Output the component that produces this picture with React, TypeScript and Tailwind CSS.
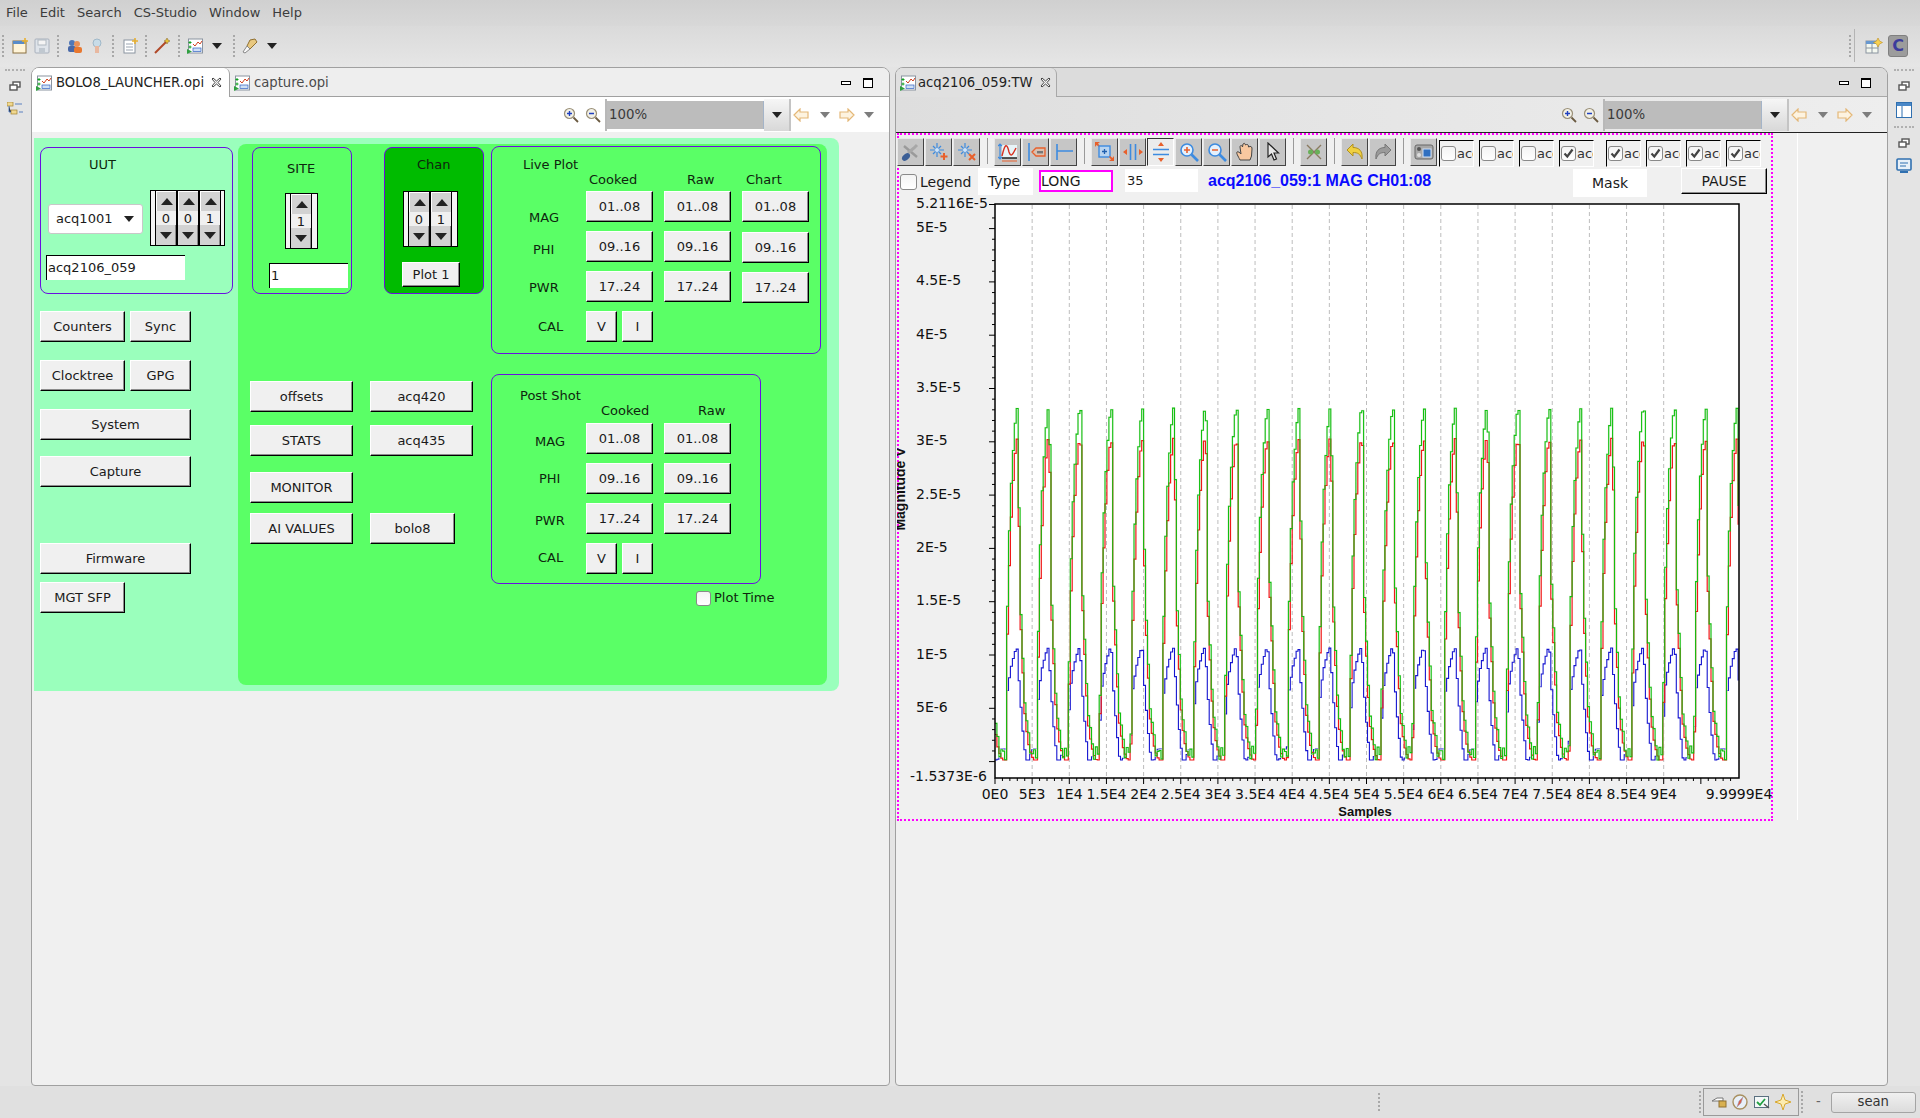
import React from 'react';

// --- small shared bits ---

const Tri = ({ up, className = 'fill-[#222]' }: { up?: boolean; className?: string }) => (
  <svg width="12" height="7" viewBox="0 0 12 7" className={className}>
    <path d={up ? 'M6 0 L12 7 L0 7 Z' : 'M0 0 L12 0 L6 7 Z'} />
  </svg>
);

const Btn = ({ className, children }: { className: string; children: React.ReactNode }) => (
  <button className={`absolute flex items-center justify-center bg-[#f0f0f0] text-[13px] text-[#1a1a1a] border-t border-l border-t-white border-l-white border-r border-b border-r-black border-b-black shadow-[inset_-1px_-1px_0_#8c8c8c] ${className}`}>
    {children}
  </button>
);

const Label = ({ className, children }: { className: string; children: React.ReactNode }) => (
  <span className={`absolute h-[16px] leading-[16px] text-[13px] text-[#0e260e] whitespace-nowrap ${className}`}>{children}</span>
);

const Spinner = ({ digits, className }: { digits: string[]; className: string }) => (
  <div className={`absolute flex h-[56px] border border-black bg-black ${className}`}>
    <div className="w-[4px] bg-[#f4f4f4]" />
    {digits.map((d, i) => (
      <div key={i} className="w-[22px] px-[1px] flex flex-col">
        <div className="h-[20px] bg-[#d2d2d2] border-t border-l border-white flex items-center justify-center"><Tri up /></div>
        <div className="h-[14px] bg-[#f0f0f0] flex items-center justify-center text-[13px] leading-none text-[#1a1a1a]">{d}</div>
        <div className="h-[20px] bg-[#d2d2d2] border-r border-[#888] flex items-center justify-center"><Tri /></div>
      </div>
    ))}
    <div className="flex-1 bg-[#f4f4f4]" />
  </div>
);

const Box = ({ className }: { className: string }) => (
  <div className={`absolute rounded-[8px] border border-[#6a10e0] ${className}`} />
);

const Check = ({ checked, className = '' }: { checked?: boolean; className?: string }) => (
  <div className={`w-[15px] h-[15px] rounded-[3px] border border-[#8a8a8a] bg-linear-to-b from-[#f4f4f4] to-white flex items-center justify-center shrink-0 ${className}`}>
    {checked && (
      <svg width="11" height="11" viewBox="0 0 11 11"><path d="M1.5 5.5 L4.3 8.5 L9.5 1.5" fill="none" stroke="#444" strokeWidth="2.2" /></svg>
    )}
  </div>
);

const Grip = ({ className = '' }: { className?: string }) => (
  <div className={`w-[2px] h-[22px] shrink-0 border-l-2 border-dotted border-[#a8a8a8] ${className}`} />
);

const HGrip = () => <div className="w-[20px] h-[2px] border-t-2 border-dotted border-[#b0b0b0]" />;

// --- icons ---

const OpiIcon = () => (
  <svg width="16" height="16" viewBox="0 0 16 16" className="shrink-0">
    <rect x="1.5" y="1" width="14" height="14" fill="#fff" stroke="#8a94a0" />
    <path d="M6 6 L8 8 L11 4 L13 6 L15 3" fill="none" stroke="#d04020" />
    <rect x="6" y="10" width="8" height="3.5" fill="#cfe0f5" stroke="#3060c0" strokeWidth=".7" />
    <path d="M3 3v3M1.5 4.5h3M3 7.5v3M1.5 9h3" stroke="#10a020" />
    <path d="M0 11 L5 13.5 L0 16 Z" fill="#30a040" />
  </svg>
);

const CloseX = () => (
  <svg width="11" height="11" viewBox="0 0 11 11" className="shrink-0">
    <path d="M1 2 L2 1 L5.5 4 L9 1 L10 2 L7 5.5 L10 9 L9 10 L5.5 7 L2 10 L1 9 L4 5.5 Z" fill="#f4f4f4" stroke="#333" strokeWidth=".9" />
  </svg>
);

const Restore = () => (
  <svg width="12" height="12" viewBox="0 0 12 12">
    <rect x="4" y="2" width="7" height="5" fill="#fff" stroke="#555" strokeWidth="1.4" />
    <rect x="1" y="5" width="7" height="5" fill="#fff" stroke="#555" strokeWidth="1.4" />
  </svg>
);

const Magnifier = ({ minus }: { minus?: boolean }) => (
  <svg width="16" height="16" viewBox="0 0 16 16">
    <circle cx="6.5" cy="6.5" r="5" fill="#f2f0e6" stroke="#9a9078" strokeWidth="1.2" />
    <path d="M10.5 10.5 L15 15" stroke="#6a5a40" strokeWidth="1.8" />
    <path d={minus ? 'M4 6.5h5' : 'M4 6.5h5M6.5 4v5'} stroke="#2040c0" strokeWidth="1.4" />
  </svg>
);

const NavArrow = ({ back }: { back?: boolean }) => (
  <svg width="16" height="14" viewBox="0 0 16 14">
    <path d={back ? 'M1 7 L7 1 L7 4 L15 4 L15 10 L7 10 L7 13 Z' : 'M15 7 L9 1 L9 4 L1 4 L1 10 L9 10 L9 13 Z'} fill="#fdf3e0" stroke="#e4b878" strokeWidth="1.2" />
  </svg>
);

const SmallCaret = () => (
  <svg width="10" height="6" viewBox="0 0 10 6" className="fill-[#7d7d7d]"><path d="M0 0h10L5 6Z" /></svg>
);

const ToolCaret = ({ className }: { className: string }) => (
  <svg width="10" height="6" viewBox="0 0 10 6" className={`shrink-0 fill-[#222] ${className}`}><path d="M0 0h10L5 6Z" /></svg>
);

// zoom combo + history arrows, same in both editors
const ZoomBar = () => (
  <div className="flex items-center justify-end h-full pr-[15px]">
    <Magnifier />
    <div className="ml-[6px]"><Magnifier minus /></div>
    <div className="ml-[4px] w-[186px] h-[32px] flex items-stretch border-l-2 border-[#b8b8b8]">
      <div className="my-[2px] w-[157px] bg-[#bcbcbc] pl-[2px] flex items-center text-[13.33px] text-[#3a3a3a] border-r border-[#a4b4c8]">100%</div>
      <div className="flex-1 flex items-center justify-center bg-linear-to-b from-[#f6f6f6] to-[#d8d8d8] border-r-2 border-[#c4c4c4]">
        <ToolCaret className="" />
      </div>
    </div>
    <div className="ml-[2px]"><NavArrow back /></div>
    <div className="ml-[11px]"><SmallCaret /></div>
    <div className="ml-[9px]"><NavArrow /></div>
    <div className="ml-[9px]"><SmallCaret /></div>
  </div>
);

const MinMax = () => (
  <div className="flex items-center gap-[12px] pr-[16px]">
    <div className="w-[10px] h-[4px] border border-black bg-white" />
    <div className="w-[10px] h-[10px] border border-black border-t-2 bg-white" />
  </div>
);

// graph toolbar icons, 20 box
const gBlue = '#3d8be0';
const gOrange = '#e8602c';
const Sparkle = () => (
  <>
    <path d="M8 1v14M1 8h14" stroke={gBlue} strokeWidth="1.2" />
    <path d="M4 4l8 8M12 4l-8 8" stroke={gBlue} strokeWidth="1.2" />
    <circle cx="8" cy="8" r="2" fill="#cfe4fa" />
  </>
);

const graphIcons: React.ReactNode[] = [
  <>
    <path d="M3 4 L16 15" stroke="#9a9a9a" strokeWidth="2.4" />
    <path d="M16 3 L13 6 L7 11" stroke="#a8a8a8" strokeWidth="3" />
    <ellipse cx="5" cy="15" rx="4.5" ry="3" fill="#3c5f96" transform="rotate(-40 5 15)" />
  </>,
  <>
    <Sparkle />
    <path d="M15 11v7M11.5 14.5h7" stroke={gOrange} strokeWidth="2" />
  </>,
  <>
    <Sparkle />
    <path d="M12 12l6 6M18 12l-6 6" stroke={gOrange} strokeWidth="2" />
  </>,
  <>
    <rect x="4" y="3" width="15" height="13" fill="#e8f4f8" />
    <path d="M2 2v15M0 4l2-2 2 2M0 15l2 2 2-2" stroke={gBlue} fill="none" strokeWidth="1.2" />
    <path d="M4 14 C7 1 9 1 11 10 C13 16 15 12 18 6" stroke="#d83020" fill="none" strokeWidth="1.4" />
    <path d="M4 16h15" stroke="#222" strokeWidth="1.4" />
    <path d="M4 19h15" stroke={gOrange} strokeWidth="1.2" />
  </>,
  <>
    <path d="M3 1v18" stroke={gBlue} strokeWidth="1.6" />
    <path d="M6 10 L10 6 H19 V14 H10 Z" fill="#d8c0b0" stroke={gOrange} strokeWidth="1.3" />
    <rect x="11" y="9" width="6" height="2.4" fill="#777" />
  </>,
  <>
    <path d="M3 2v16" stroke={gBlue} strokeWidth="1.6" />
    <path d="M3 9h16" stroke={gBlue} strokeWidth="1.6" />
  </>,
  <>
    <path d="M0 0h5L3 1.500L5 4 4 5 1.500 3 0 5Z" fill={gOrange} />
    <rect x="4" y="4" width="11" height="11" fill="#b8d4f0" stroke={gBlue} strokeWidth="1.4" />
    <path d="M7 9.500h5M9.500 7v5" stroke="#2060b0" strokeWidth="1.3" />
    <path d="M19 19h-5l2-1.500L14 15l1-1 2.500 2L19 14Z" fill={gOrange} />
  </>,
  <>
    <path d="M7.500 2v16M12.500 2v16" stroke={gBlue} strokeWidth="1.6" />
    <path d="M0 10l4-3v6ZM20 10l-4-3v6Z" fill={gOrange} />
  </>,
  <>
    <path d="M2 7.500h16M2 12.500h16" stroke={gBlue} strokeWidth="1.6" />
    <path d="M10 0l-3 4h6ZM10 20l-3-4h6Z" fill={gOrange} />
  </>,
  <>
    <circle cx="8" cy="8" r="6" fill="#e4f0fc" stroke={gBlue} strokeWidth="1.6" />
    <path d="M12.500 12.500 L19 19" stroke={gBlue} strokeWidth="2.6" />
    <path d="M5 8h6M8 5v6" stroke={gOrange} strokeWidth="1.6" />
  </>,
  <>
    <circle cx="8" cy="8" r="6" fill="#e4f0fc" stroke={gBlue} strokeWidth="1.6" />
    <path d="M12.500 12.500 L19 19" stroke={gBlue} strokeWidth="2.6" />
    <path d="M5 8h6" stroke={gOrange} strokeWidth="1.6" />
  </>,
  <path d="M5 18 C3 14 1 11 2 10 C3 9 5 11 6 12 L5 5 C5 3 7 3 7.500 5 L8 2 C9 1 10 1 10.500 3 L11.500 2.500 C13 2 13.500 3.500 13.500 5 L15 4.500 C16.500 4 17 5.500 17 7 L16.500 14 L15 18 Z" fill="#f8c8a0" stroke="#444" strokeWidth="1" />,
  <path d="M5 1 L5 15 L8.500 12 L11 18 L13.500 17 L11 11 L15.500 11 Z" fill="#e8e8e8" stroke="#222" strokeWidth="1.2" />,
  <>
    <path d="M3 3 L17 17M17 3 L3 17" stroke="#8a7a60" strokeWidth="1.4" />
    <circle cx="6.500" cy="10" r="2.500" fill="#68b058" />
    <circle cx="13.500" cy="10" r="2.500" fill="#68b058" />
  </>,
  <path d="M2 8 L8 2 V5.500 C14 5.500 18 9 17 17 C15 12 13 10.500 8 10.500 V14 Z" fill="#f0d040" stroke="#b09020" strokeWidth="1" />,
  <path d="M18 8 L12 2 V5.500 C6 5.500 2 9 3 17 C5 12 7 10.500 12 10.500 V14 Z" fill="#9a9a9a" stroke="#777" strokeWidth="1" />,
  <>
    <rect x="1" y="3" width="18" height="14" rx="2" fill="#a8a8a8" stroke="#666" />
    <circle cx="5" cy="7" r="2" fill="#555" />
    <circle cx="5" cy="13" r="2" fill="#ddd" />
    <rect x="9" y="7" width="8" height="8" fill="#2f6fc0" stroke="#cfe0f5" />
  </>,
];

const ToolBtn = ({ pressed, className = '', children }: { pressed?: boolean; className?: string; children: React.ReactNode }) => (
  <div className={`w-[27px] h-[28px] shrink-0 flex items-center justify-center border ${pressed ? 'bg-[#ececec] border-t-[#333] border-l-[#333] border-r-white border-b-white' : 'bg-[#c6c6c6] border-t-[#e8e8e8] border-l-[#e8e8e8] border-r-[#444] border-b-[#444]'} ${className}`}>
    <svg width="20" height="20" viewBox="0 0 20 20">{children}</svg>
  </div>
);

const ToolSep = () => <div className="w-[1px] h-[26px] bg-[#9a9a9a] ml-[6px] mr-[5px] shrink-0" />;

const ChanCheck = ({ checked, className }: { checked?: boolean; className: string }) => (
  <div className={`absolute top-[7px] w-[35px] h-[27px] flex items-center overflow-hidden border-t border-l border-t-black border-l-black border-r border-b border-r-white border-b-white bg-[#f0f0f0] ${className}`}>
    <Check checked={checked} className="ml-[1px]" />
    <span className="text-[13px] ml-[1px] text-[#333]">acq</span>
  </div>
);

// --- chart data, page pixel coords ---

const PERIOD = 31.3;
const X0 = 995;
const X1 = 1739;
const STEP = 1.93;

const greenPts: [number, number][] = [
  [-11.3, 759], [-11, 720], [-10, 640], [-9, 580], [-7.5, 530], [-6, 490], [-4, 455], [-2, 425], [0, 407], [1.5, 410],
  [2, 480], [2.6, 580], [5.7, 650], [8.3, 710], [12, 733], [14, 755], [15, 759], [16.5, 745], [18, 750], [20, 759],
];
const redPts: [number, number][] = [
  [-11.3, 759], [-11, 735], [-10, 665], [-9, 610], [-7.5, 565], [-6, 525], [-4, 485], [-2, 455], [0, 437], [1.5, 445],
  [2, 500], [2.6, 595], [5.7, 665], [8.3, 720], [12, 745], [14, 752], [15, 755], [17, 759], [20, 759],
];
const bluePts: [number, number][] = [
  [-11.3, 748], [-11, 727], [-9.5, 690], [-6, 667], [-3, 655], [-1, 648], [0, 647], [1, 652], [2.3, 683], [5.7, 727],
  [9, 759], [12, 759], [14, 752], [16, 748], [20, 748],
];

const sample = (pts: [number, number][], x: number) => {
  let o = (x - 1016) % PERIOD;
  if (o < -11.3) o += PERIOD;
  if (o > 20) o -= PERIOD;
  for (let i = 1; i < pts.length; i++) {
    if (o <= pts[i][0]) {
      const [ax, ay] = pts[i - 1];
      const [bx, by] = pts[i];
      return ay + ((by - ay) * (o - ax)) / (bx - ax);
    }
  }
  return pts[pts.length - 1][1];
};

const trace = (pts: [number, number][], dx: number) => {
  let d = `M${X0} ${sample(pts, X0).toFixed(1)}`;
  for (let x = X0 + dx; x < X1; x += dx) {
    d += `H${x.toFixed(1)}V${sample(pts, x).toFixed(1)}`;
  }
  return d;
};

const Chart = () => {
  const xLabels = ['0E0', '5E3', '1E4', '1.5E4', '2E4', '2.5E4', '3E4', '3.5E4', '4E4', '4.5E4', '5E4', '5.5E4', '6E4', '6.5E4', '7E4', '7.5E4', '8E4', '8.5E4', '9E4'];
  const pxPerK = 7.43;
  const yLabels = ['5E-6', '1E-5', '1.5E-5', '2E-5', '2.5E-5', '3E-5', '3.5E-5', '4E-5', '4.5E-5', '5E-5'];
  const zeroY = 760.6;
  const minor = 10.66;
  return (
    <svg width="876" height="622" viewBox="897 195 876 622" className="absolute left-[1px] top-[63px]" style={{ fontFamily: '"DejaVu Sans", sans-serif' }}>
      <rect x={X0} y={203} width={X1 - X0} height={574} fill="#fff" />
      {xLabels.slice(1).map((_, i) => (
        <line key={i} x1={X0 + (i + 1) * 5 * pxPerK} x2={X0 + (i + 1) * 5 * pxPerK} y1={204} y2={776} stroke="#bdbdbd" strokeDasharray="4 3" />
      ))}
      <path d={trace(bluePts, STEP)} fill="none" stroke="#1414d0" strokeWidth="1.1" />
      <path d={trace(greenPts, STEP)} fill="none" stroke="#edf3e6" strokeWidth="2" />
      <path d={trace(redPts, STEP)} fill="none" stroke="#f01818" strokeWidth="1.2" />
      <path d={trace(greenPts, STEP)} fill="none" stroke="#10c010" strokeWidth="1.1" />
      <rect x={X0} y={203} width={X1 - X0} height={574} fill="none" stroke="#000" strokeWidth="1.5" />
      {Array.from({ length: 100 }, (_, i) => (
        <line key={i} x1={X0 + i * pxPerK} x2={X0 + i * pxPerK} y1={777} y2={i % 5 === 0 ? 783 : 780} stroke="#000" />
      ))}
      {Array.from({ length: 52 }, (_, i) => (
        <line key={i} x1={i % 5 === 0 ? 989 : 992} x2={X0} y1={zeroY - i * minor} y2={zeroY - i * minor} stroke="#000" />
      ))}
      <line x1={989} x2={X0} y1={203.500} y2={203.500} stroke="#000" />
      <g fontSize="14" fill="#111">
        <text x={916} y={207}>5.2116E-5</text>
        {yLabels.map((t, i) => (
          <text key={t} x={916} y={zeroY - (i + 1) * 5 * minor + 3.5}>{t}</text>
        ))}
        <text x={910} y={780}>-1.5373E-6</text>
        {xLabels.map((t, i) => (
          <text key={t} x={X0 + i * 5 * pxPerK} y={798} textAnchor="middle">{t}</text>
        ))}
        <text x={X1} y={798} textAnchor="middle">9.9999E4</text>
      </g>
      <g fontWeight="700" fill="#111" style={{ fontFamily: '"Liberation Sans", sans-serif' }}>
        <text x={1365} y={815} fontSize="13" textAnchor="middle">Samples</text>
        <text transform="translate(905 488) rotate(-90)" fontSize="14" textAnchor="middle">Magnitude V</text>
      </g>
    </svg>
  );
};

// --- OPI screens ---

const LauncherCanvas = () => (
  <div className="relative ml-[2px] mt-[6px] w-[805px] h-[553px] bg-[#9affbc] rounded-r-[8px] rounded-bl-none">
    <div className="absolute left-[204px] top-[6px] w-[589px] h-[541px] bg-[#5aff66] rounded-[8px]" />

    <Box className="left-[6px] top-[9px] w-[193px] h-[147px]" />
    <Box className="left-[218px] top-[9px] w-[100px] h-[147px]" />
    <Box className="left-[350px] top-[9px] w-[100px] h-[147px] bg-[#00bb00]" />
    <Box className="left-[457px] top-[8px] w-[330px] h-[208px]" />
    <Box className="left-[457px] top-[236px] w-[270px] h-[210px]" />

    <Label className="left-[55px] top-[19px]">UUT</Label>
    <div className="absolute left-[14px] top-[66px] w-[95px] h-[30px] bg-white border border-[#c8c8c8] rounded-[3px] flex items-center justify-between pl-[7px] pr-[8px] text-[13px] text-[#1a1a1a]">
      acq1001
      <svg width="10" height="6" viewBox="0 0 10 6" className="fill-[#222]"><path d="M0 0h10L5 6Z" /></svg>
    </div>
    <Spinner digits={['0', '0', '1']} className="left-[116px] top-[52px] w-[75px]" />
    <div className="absolute left-[12px] top-[117px] w-[139px] h-[25px] bg-white border-t border-l border-black pl-[1px] flex items-center text-[13px] text-[#1a1a1a]">acq2106_059</div>

    <Label className="left-[253px] top-[23px]">SITE</Label>
    <Spinner digits={['1']} className="left-[251px] top-[55px] w-[33px]" />
    <div className="absolute left-[235px] top-[125px] w-[79px] h-[25px] bg-white border-t border-l border-black pl-[1px] flex items-center text-[13px] text-[#1a1a1a]">1</div>

    <Label className="left-[383px] top-[19px]">Chan</Label>
    <Spinner digits={['0', '1']} className="left-[369px] top-[53px] w-[55px]" />
    <Btn className="left-[368px] top-[124px] w-[58px] h-[25px]">Plot 1</Btn>

    <Btn className="left-[6px] top-[173px] w-[85px] h-[31px]">Counters</Btn>
    <Btn className="left-[96px] top-[173px] w-[61px] h-[31px]">Sync</Btn>
    <Btn className="left-[6px] top-[222px] w-[85px] h-[31px]">Clocktree</Btn>
    <Btn className="left-[96px] top-[222px] w-[61px] h-[31px]">GPG</Btn>
    <Btn className="left-[6px] top-[271px] w-[151px] h-[31px]">System</Btn>
    <Btn className="left-[6px] top-[318px] w-[151px] h-[31px]">Capture</Btn>
    <Btn className="left-[6px] top-[405px] w-[151px] h-[31px]">Firmware</Btn>
    <Btn className="left-[6px] top-[444px] w-[85px] h-[31px]">MGT SFP</Btn>

    <Btn className="left-[216px] top-[243px] w-[103px] h-[31px]">offsets</Btn>
    <Btn className="left-[336px] top-[243px] w-[103px] h-[31px]">acq420</Btn>
    <Btn className="left-[216px] top-[287px] w-[103px] h-[31px]">STATS</Btn>
    <Btn className="left-[336px] top-[287px] w-[103px] h-[31px]">acq435</Btn>
    <Btn className="left-[216px] top-[334px] w-[103px] h-[31px]">MONITOR</Btn>
    <Btn className="left-[216px] top-[375px] w-[103px] h-[31px]">AI VALUES</Btn>
    <Btn className="left-[336px] top-[375px] w-[85px] h-[31px]">bolo8</Btn>

    <Label className="left-[489px] top-[19px]">Live Plot</Label>
    <Label className="left-[555px] top-[34px]">Cooked</Label>
    <Label className="left-[653px] top-[34px]">Raw</Label>
    <Label className="left-[712px] top-[34px]">Chart</Label>
    <Label className="left-[495px] top-[72px]">MAG</Label>
    <Label className="left-[499px] top-[104px]">PHI</Label>
    <Label className="left-[495px] top-[142px]">PWR</Label>
    <Label className="left-[504px] top-[181px]">CAL</Label>
    <Btn className="left-[552px] top-[53px] w-[67px] h-[31px]">01..08</Btn>
    <Btn className="left-[630px] top-[53px] w-[67px] h-[31px]">01..08</Btn>
    <Btn className="left-[708px] top-[53px] w-[67px] h-[31px]">01..08</Btn>
    <Btn className="left-[552px] top-[93px] w-[67px] h-[31px]">09..16</Btn>
    <Btn className="left-[630px] top-[93px] w-[67px] h-[31px]">09..16</Btn>
    <Btn className="left-[708px] top-[94px] w-[67px] h-[31px]">09..16</Btn>
    <Btn className="left-[552px] top-[133px] w-[67px] h-[31px]">17..24</Btn>
    <Btn className="left-[630px] top-[133px] w-[67px] h-[31px]">17..24</Btn>
    <Btn className="left-[708px] top-[134px] w-[67px] h-[31px]">17..24</Btn>
    <Btn className="left-[552px] top-[173px] w-[31px] h-[31px]">V</Btn>
    <Btn className="left-[588px] top-[173px] w-[31px] h-[31px]">I</Btn>

    <Label className="left-[486px] top-[250px]">Post Shot</Label>
    <Label className="left-[567px] top-[265px]">Cooked</Label>
    <Label className="left-[664px] top-[265px]">Raw</Label>
    <Label className="left-[501px] top-[296px]">MAG</Label>
    <Label className="left-[505px] top-[333px]">PHI</Label>
    <Label className="left-[501px] top-[375px]">PWR</Label>
    <Label className="left-[504px] top-[412px]">CAL</Label>
    <Btn className="left-[552px] top-[285px] w-[67px] h-[31px]">01..08</Btn>
    <Btn className="left-[630px] top-[285px] w-[67px] h-[31px]">01..08</Btn>
    <Btn className="left-[552px] top-[325px] w-[67px] h-[31px]">09..16</Btn>
    <Btn className="left-[630px] top-[325px] w-[67px] h-[31px]">09..16</Btn>
    <Btn className="left-[552px] top-[365px] w-[67px] h-[31px]">17..24</Btn>
    <Btn className="left-[630px] top-[365px] w-[67px] h-[31px]">17..24</Btn>
    <Btn className="left-[552px] top-[405px] w-[31px] h-[31px]">V</Btn>
    <Btn className="left-[588px] top-[405px] w-[31px] h-[31px]">I</Btn>

    <Check className="absolute left-[662px] top-[453px]" />
    <Label className="left-[680px] top-[452px]">Plot Time</Label>
  </div>
);

const ScopeCanvas = () => (
  <div className="relative w-full h-full border-t border-[#222]">
    <div className="absolute left-[901px] top-0 bottom-[265px] w-[1px] bg-white" />
    <div className="absolute left-[1px] top-[0px] w-[876px] h-[688px] border-2 border-dotted border-[#ff00ff]" />

    <div className="absolute left-[1px] top-[5px] flex gap-[1px]">
      {graphIcons.slice(0, 3).map((g, i) => <ToolBtn key={i}>{g}</ToolBtn>)}
      <ToolSep />
      {graphIcons.slice(3, 6).map((g, i) => <ToolBtn key={i}>{g}</ToolBtn>)}
      <ToolSep />
      {graphIcons.slice(6, 13).map((g, i) => <ToolBtn key={i} pressed={i === 2}>{g}</ToolBtn>)}
      <ToolSep />
      <ToolBtn>{graphIcons[13]}</ToolBtn>
      <ToolSep />
      {graphIcons.slice(14, 16).map((g, i) => <ToolBtn key={i}>{g}</ToolBtn>)}
      <ToolSep />
      <ToolBtn>{graphIcons[16]}</ToolBtn>
    </div>

    <ChanCheck className="left-[543px]" />
    <ChanCheck className="left-[583px]" />
    <ChanCheck className="left-[623px]" />
    <ChanCheck checked className="left-[663px]" />
    <ChanCheck checked className="left-[710px]" />
    <ChanCheck checked className="left-[750px]" />
    <ChanCheck checked className="left-[790px]" />
    <ChanCheck checked className="left-[830px]" />

    <Check className="absolute left-[4px] top-[41px] !w-[17px] !h-[16px]" />
    <span className="absolute left-[24px] top-[41px] leading-[16px] text-[14px] text-[#1a1a1a]">Legend</span>
    <div className="absolute left-[82px] top-[35px] w-[55px] h-[27px] bg-white flex items-center pl-[10px] text-[14px] text-[#1a1a1a]">Type</div>
    <div className="absolute left-[143px] top-[37px] w-[74px] h-[22px] bg-white border-2 border-[#ff00ff] flex items-center pl-[0px] text-[14px] text-[#1a1a1a]">LONG</div>
    <div className="absolute left-[229px] top-[36px] w-[73px] h-[23px] bg-white flex items-center pl-[2px] text-[13px] text-[#1a1a1a]">35</div>
    <span className="absolute left-[312px] top-[38px] leading-[20px] text-[16px] font-bold text-[#0a0aff] whitespace-nowrap" style={{ fontFamily: '"Liberation Sans", sans-serif' }}>acq2106_059:1 MAG CH01:08</span>
    <div className="absolute left-[677px] top-[36px] w-[74px] h-[28px] bg-white flex items-center justify-center text-[14px] text-[#1a1a1a]">Mask</div>
    <Btn className="left-[785px] top-[35px] w-[86px] h-[26px] !text-[14px]">PAUSE</Btn>

    <Chart />
  </div>
);

// --- window ---

const App = () => (
  <div className="w-[1920px] h-[1118px] flex flex-col overflow-hidden bg-[#e4e4e4] text-[13.2px] text-[#3c3c3c]" style={{ fontFamily: '"DejaVu Sans", sans-serif' }}>
    {/* menu bar */}
    <div className="h-[26px] shrink-0 flex items-center gap-[12px] pl-[6px] pb-[1px] text-[13px] bg-linear-to-b from-[#d0d0d0] to-[#d8d8d8]">
      {['File', 'Edit', 'Search', 'CS-Studio', 'Window', 'Help'].map(m => <span key={m}>{m}</span>)}
    </div>

    {/* main toolbar */}
    <div className="h-[41px] shrink-0 flex items-center pb-[2px] bg-linear-to-b from-[#dadada] to-[#e6e6e6]">
      <Grip className="ml-[2px]" />
      <svg width="16" height="16" viewBox="0 0 16 16" className="ml-[8px]"><rect x="1" y="3" width="13" height="12" fill="#fff4d8" stroke="#8a7040" /><rect x="1" y="3" width="13" height="3" fill="#5a8cc8" /><path d="M13 0v6M10 3h6" stroke="#e8b030" strokeWidth="1.6" /></svg>
      <svg width="16" height="16" viewBox="0 0 16 16" className="ml-[6px]"><rect x="1" y="1" width="14" height="14" rx="1" fill="#dfe4ea" stroke="#a8b0bc" /><rect x="4" y="2" width="8" height="5" fill="#f4f4f4" stroke="#b0b8c0" /><rect x="5" y="10" width="6" height="5" fill="#c0c8d0" /></svg>
      <Grip className="ml-[7px]" />
      <svg width="16" height="16" viewBox="0 0 16 16" className="ml-[8px]"><circle cx="5" cy="5" r="3" fill="#5078b8" /><rect x="1" y="8" width="8" height="6" rx="2" fill="#4868a8" /><circle cx="10" cy="6" r="3" fill="#e89058" /><rect x="7" y="9" width="8" height="6" rx="2" fill="#e87830" /></svg>
      <svg width="16" height="16" viewBox="0 0 16 16" className="ml-[6px]"><circle cx="8" cy="5" r="4" fill="#c8dce8" stroke="#a0b8c8" /><rect x="6" y="8" width="4" height="7" fill="#e8b8a0" /></svg>
      <Grip className="ml-[7px]" />
      <svg width="16" height="16" viewBox="0 0 16 16" className="ml-[8px]"><rect x="2" y="2" width="11" height="13" fill="#fff" stroke="#8a94a0" /><path d="M4 6h7M4 9h7M4 12h7" stroke="#9aa4b0" /><path d="M13 0v6M10 3h6" stroke="#e8b030" strokeWidth="1.6" /></svg>
      <Grip className="ml-[7px]" />
      <svg width="16" height="16" viewBox="0 0 16 16" className="ml-[7px]"><path d="M1 15 L12 4" stroke="#b04828" strokeWidth="2" /><path d="M13 0l1 2 2 1-2 1-1 2-1-2-2-1 2-1Z" fill="#e8c030" stroke="#806020" strokeWidth=".5" /></svg>
      <Grip className="ml-[8px]" />
      <div className="ml-[7px]"><OpiIcon /></div>
      <ToolCaret className="ml-[9px]" />
      <Grip className="ml-[11px]" />
      <svg width="16" height="16" viewBox="0 0 16 16" className="ml-[7px]"><path d="M8 2 L13 1 L15 4 L8 11 L5 8 Z" fill="#e8c880" stroke="#907030" /><path d="M5 8 L8 11 L3 15 L1 14 Z" fill="#f8f8f8" stroke="#888" /></svg>
      <ToolCaret className="ml-[9px]" />
      <div className="flex-1" />
      <Grip className="mr-[3px]" />
      <div className="w-[1px] h-[33px] bg-[#b4b4b4]" />
      <svg width="18" height="16" viewBox="0 0 18 16" className="ml-[10px]"><rect x="1" y="3" width="12" height="12" fill="#f4f8f0" stroke="#8a94a0" /><rect x="1" y="3" width="12" height="3" fill="#6898d0" /><path d="M7 6v9M1 10h12" stroke="#8a94a0" /><path d="M13 0l1.500 3 3 1.500-3 1.500L13 9l-1.500-3-3-1.500 3-1.500Z" fill="#f8d050" stroke="#c09020" strokeWidth=".6" /></svg>
      <div className="ml-[5px] mr-[12px] w-[20px] h-[22px] bg-[#9c9c9c] border border-[#808080] rounded-[3px] flex items-center justify-center text-[16px] font-bold text-[#3c3c9c]">C</div>
    </div>

    {/* workbench */}
    <div className="flex-1 flex min-h-0">
      <div className="w-[31px] shrink-0 flex flex-col items-center gap-[9px] pt-[2px] -translate-x-[1px]">
        <HGrip />
        <Restore />
        <svg width="16" height="14" viewBox="0 0 16 14" className="mt-[1px]"><rect x="0" y="0" width="6" height="4" fill="#f0d890" stroke="#a08030" strokeWidth=".7" /><rect x="4" y="8" width="6" height="4" fill="#f0d890" stroke="#a08030" strokeWidth=".7" /><path d="M2 4v6h2M8 2h7M12 10h4" stroke="#5a80c0" /></svg>
      </div>

      <div className="w-[859px] shrink-0 flex flex-col border border-[#a0a0a0] rounded-t-[8px] rounded-b-[4px] bg-[#f0f0f0] overflow-hidden">
        <div className="h-[29px] shrink-0 flex bg-[#eeeeee] relative">
          <div className="absolute left-0 right-0 bottom-0 h-[1px] bg-[#a0a0a0]" />
          <div className="relative z-10 w-[198px] flex items-center pl-[4px] bg-white border-r border-[#a0a0a0] rounded-tr-[6px] text-[#222]">
            <OpiIcon />
            <span className="ml-[4px]">BOLO8_LAUNCHER.opi</span>
            <span className="ml-[7px]"><CloseX /></span>
          </div>
          <div className="flex items-center pl-[4px] text-[#4a4a4a]">
            <OpiIcon />
            <span className="ml-[4px]">capture.opi</span>
          </div>
          <div className="flex-1" />
          <MinMax />
        </div>
        <div className="h-[35px] shrink-0 bg-white"><ZoomBar /></div>
        <div className="flex-1 min-h-0"><LauncherCanvas /></div>
      </div>

      <div className="w-[5px] shrink-0" />

      <div className="w-[993px] shrink-0 flex flex-col border border-[#a0a0a0] rounded-t-[8px] rounded-b-[4px] bg-[#f0f0f0] overflow-hidden">
        <div className="h-[29px] shrink-0 flex bg-[#dcdcdc] relative">
          <div className="absolute left-0 right-0 bottom-0 h-[1px] bg-[#a8a8a8]" />
          <div className="relative z-10 w-[161px] flex items-center pl-[4px] bg-[#e0e0e0] border-r border-[#a8a8a8] rounded-tr-[6px] text-[#222]">
            <OpiIcon />
            <span className="ml-[2px]">acq2106_059:TW</span>
            <span className="ml-[7px]"><CloseX /></span>
          </div>
          <div className="flex-1" />
          <MinMax />
        </div>
        <div className="h-[35px] shrink-0 bg-linear-to-r from-[#dedede] to-[#eeeeee]"><ZoomBar /></div>
        <div className="flex-1 min-h-0"><ScopeCanvas /></div>
      </div>

      <div className="flex-1 flex flex-col items-center pt-[2px]">
        <HGrip />
        <div className="mt-[9px]"><Restore /></div>
        <svg width="16" height="16" viewBox="0 0 16 16" className="mt-[10px]"><rect x=".5" y=".5" width="15" height="15" fill="#fff" stroke="#3070b0" /><rect x="1" y="1" width="14" height="3" fill="#4a88c8" /><path d="M6 4v11" stroke="#3070b0" /></svg>
        <div className="mt-[8px]"><HGrip /></div>
        <div className="mt-[9px]"><Restore /></div>
        <svg width="16" height="16" viewBox="0 0 16 16" className="mt-[9px]"><rect x="1" y="1" width="14" height="11" rx="1" fill="#e8f0f8" stroke="#3070b0" strokeWidth="1.6" /><path d="M4 5h8M4 8h6" stroke="#3070b0" /><path d="M4 14h8" stroke="#3070b0" strokeWidth="2" /></svg>
      </div>
    </div>

    {/* status bar */}
    <div className="h-[32px] shrink-0 flex items-center bg-[#e0e0e0]">
      <div className="ml-[1378px] w-[2px] h-[18px] border-l-2 border-dotted border-[#a8a8a8]" />
      <div className="ml-[319px] w-[2px] h-[22px] border-l-2 border-dotted border-[#a8a8a8]" />
      <div className="ml-[2px] w-[96px] h-[28px] border border-[#9a9a9a] flex items-center justify-around px-[4px]">
        <svg width="16" height="12" viewBox="0 0 16 12"><path d="M1 5 L6 2 H12 V5 H7 Z" fill="#fff" stroke="#777" /><rect x="8" y="5" width="7" height="6" fill="#d8b050" stroke="#907030" /></svg>
        <svg width="16" height="16" viewBox="0 0 16 16"><circle cx="8" cy="8" r="7" fill="#e8f0f8" stroke="#a89060" strokeWidth="1.4" /><path d="M11 3 L9 9 L5 13 L7 7 Z" fill="#d8604a" stroke="#9898b8" strokeWidth=".5" /></svg>
        <svg width="16" height="13" viewBox="0 0 16 13"><rect x=".5" y=".5" width="14" height="11" fill="#f4f8f8" stroke="#5a7080" /><path d="M3 6l3 3 5-6" fill="none" stroke="#20a040" strokeWidth="1.8" /><path d="M10 8l5 4" stroke="#555" strokeWidth="1.4" /></svg>
        <svg width="16" height="16" viewBox="0 0 16 16"><path d="M8 0 L10 6 L16 8 L10 10 L8 16 L6 10 L0 8 L6 6 Z" fill="#fcecb0" stroke="#d8a830" /></svg>
      </div>
      <div className="ml-[2px] w-[2px] h-[22px] border-l-2 border-dotted border-[#a8a8a8]" />
      <span className="ml-[13px] text-[#666]">-</span>
      <div className="ml-[10px] w-[85px] h-[21px] border border-[#a4a4a4] rounded-[3px] bg-linear-to-b from-[#f0f0f0] to-[#dcdcdc] flex items-center justify-center text-[#333]">sean</div>
    </div>
  </div>
);

export default App;
